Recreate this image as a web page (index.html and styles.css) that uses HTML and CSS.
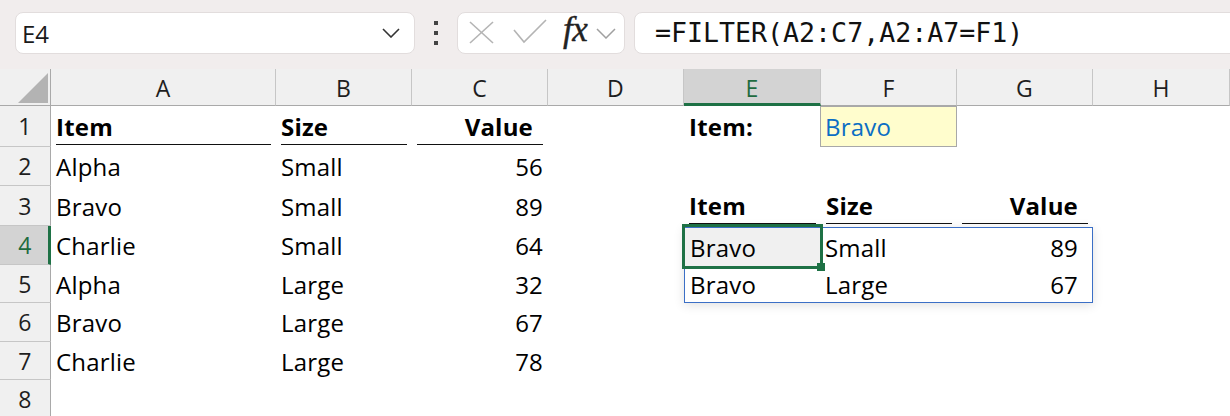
FILE: index.html
```html
<!DOCTYPE html>
<html>
<head>
<meta charset="utf-8">
<link rel="stylesheet" href="styles.css">
</head>
<body>
<div class="topbar">
  <div class="namebox">
    <span class="nb-text">E4</span>
    <svg class="nb-chev" width="18" height="10" viewBox="0 0 18 10"><polyline points="1,1 9,9 17,1" fill="none" stroke="#333" stroke-width="1.6"/></svg>
  </div>
  <div class="dots"><span></span><span></span><span></span></div>
  <div class="fxbox">
    <svg class="xc" width="92" height="42" viewBox="0 0 92 42">
      <line x1="12" y1="10" x2="35" y2="31" stroke="#b4b4b4" stroke-width="1.6"/>
      <line x1="35" y1="10" x2="12" y2="31" stroke="#b4b4b4" stroke-width="1.6"/>
      <polyline points="56,18 66,30 88,8" fill="none" stroke="#b4b4b4" stroke-width="1.6"/>
    </svg>
    <span class="fx">fx</span>
    <svg class="fx-chev" width="20" height="11" viewBox="0 0 20 11"><polyline points="1,1 10,10 19,1" fill="none" stroke="#a0a0a0" stroke-width="1.5"/></svg>
  </div>
  <div class="formula">=FILTER(A2:C7,A2:A7=F1)</div>
</div>

<div class="sheet">
  <div class="corner"><svg width="51" height="37" viewBox="0 0 51 37"><polygon points="48,4 48,34 18,34" fill="#b3b3b3"/></svg></div>
  <div class="ch">A</div><div class="ch">B</div><div class="ch">C</div><div class="ch">D</div>
  <div class="ch sel">E</div><div class="ch">F</div><div class="ch">G</div><div class="ch">H</div>

  <div class="rh">1</div>
  <div class="c"><div class="hd">Item</div></div>
  <div class="c"><div class="hd">Size</div></div>
  <div class="c"><div class="hd r">Value</div></div>
  <div class="c"></div>
  <div class="c b">Item:</div>
  <div class="c input">Bravo</div>
  <div class="c"></div><div class="c"></div>

  <div class="rh">2</div>
  <div class="c">Alpha</div><div class="c">Small</div><div class="c r">56</div>
  <div class="c"></div><div class="c"></div><div class="c"></div><div class="c"></div><div class="c"></div>

  <div class="rh">3</div>
  <div class="c">Bravo</div><div class="c">Small</div><div class="c r">89</div>
  <div class="c"></div>
  <div class="c"><div class="hd">Item</div></div>
  <div class="c"><div class="hd">Size</div></div>
  <div class="c"><div class="hd r">Value</div></div>
  <div class="c"></div>

  <div class="spill">
    <div class="sc active">Bravo</div><div class="sc f">Small</div><div class="sc r rg">89</div>
    <div class="sc">Bravo</div><div class="sc f">Large</div><div class="sc r rg">67</div>
  </div>

  <div class="rh sel">4</div>
  <div class="c">Charlie</div><div class="c">Small</div><div class="c r">64</div>
  <div class="c"></div><div class="c"></div>

  <div class="rh">5</div>
  <div class="c">Alpha</div><div class="c">Large</div><div class="c r">32</div>
  <div class="c"></div><div class="c"></div>

  <div class="rh">6</div>
  <div class="c">Bravo</div><div class="c">Large</div><div class="c r">67</div>
  <div class="c"></div><div class="c"></div><div class="c"></div><div class="c"></div><div class="c"></div>

  <div class="rh">7</div>
  <div class="c">Charlie</div><div class="c">Large</div><div class="c r">78</div>
  <div class="c"></div><div class="c"></div><div class="c"></div><div class="c"></div><div class="c"></div>

  <div class="rh">8</div>
  <div class="c"></div><div class="c"></div><div class="c"></div><div class="c"></div>
  <div class="c"></div><div class="c"></div><div class="c"></div><div class="c"></div>
</div>
</body>
</html>
```

FILE: styles.css
```css
* { box-sizing: border-box; }
html, body { margin: 0; padding: 0; }
body {
  width: 1230px;
  height: 416px;
  overflow: hidden;
  background: #ffffff;
  font-family: "Open Sans", "Noto Sans", sans-serif;
  color: #000;
}

.topbar {
  height: 69px;
  background: #f1eded;
  display: flex;
  align-items: flex-start;
  padding: 12px 0 0 15px;
}
.namebox {
  width: 400px;
  height: 42px;
  background: #fff;
  border: 1px solid #e2dddd;
  border-radius: 8px;
  display: flex;
  align-items: center;
  justify-content: space-between;
  padding: 0 14px 0 6px;
}
.nb-text {
  font-size: 24px;
  color: #1a1a1a;
}
.nb-chev { display: block; }
.dots {
  width: 42px;
  height: 42px;
  display: flex;
  flex-direction: column;
  align-items: center;
  justify-content: center;
  gap: 6px;
}
.dots span {
  width: 4px;
  height: 4px;
  background: #444;
  display: block;
}
.fxbox {
  width: 168px;
  height: 42px;
  background: #fff;
  border: 1px solid #e2dddd;
  border-radius: 8px;
  display: flex;
  align-items: center;
}
.xc { display: block; flex: none; }
.fx {
  font-family: "Liberation Serif", serif;
  font-style: italic;
  font-size: 35px;
  color: #222;
  margin-left: 13px;
  line-height: 42px;
  margin-top: -6px;
  letter-spacing: -0.5px;
  -webkit-text-stroke: 0.4px #222;
}
.fx-chev { display: block; margin-left: 9px; }
.formula {
  flex: 1;
  margin-left: 9px;
  margin-right: -20px;
  height: 42px;
  background: #fff;
  border: 1px solid #e2dddd;
  border-radius: 8px;
  font-family: "DejaVu Sans Mono", "Liberation Mono", monospace;
  font-size: 26.6px;
  line-height: 40px;
  padding-left: 20px;
  color: #111;
}

.sheet {
  display: grid;
  grid-template-columns: 51px 225px 136px 136px 136px 137px 136px 136px 137px;
  grid-template-rows: 37px 41px 39px 40px 39px 38px 39px 38px 38px;
  font-size: 24px;
  letter-spacing: 0.2px;
}
.corner {
  background: #f0f0f0;
  border-right: 1px solid #a9a9a9;
  border-bottom: 1px solid #a9a9a9;
}
.corner svg { display: block; }
.ch {
  background: #f0f0f0;
  border-right: 1px solid #c6c6c6;
  border-bottom: 1px solid #a9a9a9;
  display: flex;
  align-items: center;
  justify-content: center;
  font-size: 23px;
  color: #1e1e1e;
  padding-top: 2px;
}
.ch.sel {
  background: #d3d3d3;
  border-bottom: 3px solid #1e7145;
  color: #1e6b40;
  padding-top: 4px;
}
.rh {
  background: #f0f0f0;
  border-right: 1px solid #a9a9a9;
  border-bottom: 1px solid #c6c6c6;
  display: flex;
  align-items: center;
  justify-content: center;
  font-size: 23px;
  color: #1e1e1e;
}
.rh.sel {
  background: #d3d3d3;
  border-right: 3px solid #1e7145;
  color: #1e6b40;
  padding-left: 2px;
}
.c {
  display: flex;
  align-items: center;
  padding: 0 5px;
  white-space: nowrap;
  min-width: 0;
}
.c.r { justify-content: flex-end; }
.c.b { font-weight: 700; }
.hd {
  flex: 1;
  align-self: stretch;
  display: flex;
  align-items: center;
  font-weight: 700;
  border-bottom: 1px solid #111;
  margin-bottom: 2px;
  padding-top: 2px;
}
.c:has(.hd) { padding: 0 5px; align-items: stretch; }
.hd.r { justify-content: flex-end; padding-right: 10px; }
.c.input {
  background: #fffdcd;
  border: 1px solid #a8a8a8;
  color: #0b6ec4;
  padding-left: 4px;
  margin-left: -1px;
}

.spill {
  grid-column: 6 / 9;
  grid-row: 5 / 7;
  border: 1px solid #3b6fc6;
  box-shadow: 0 2px 10px rgba(0, 0, 0, 0.13);
  display: grid;
  grid-template-columns: 136px 136px 135px;
  grid-template-rows: 38px 37px;
  margin-top: 1px;
  background: #fff;
}
.sc {
  display: flex;
  align-items: center;
  padding: 0 5px;
  white-space: nowrap;
}
.sc.f { padding-left: 4px; }
.sc.r { justify-content: flex-end; }
.sc.rg { padding-right: 14px; }
.sc.active {
  position: relative;
  background: #f0f0f0;
}
.sc.active::after {
  content: "";
  position: absolute;
  left: -3px;
  top: -4px;
  right: -2px;
  bottom: -3px;
  border: 3px solid #1e7145;
}
.sc.active::before {
  content: "";
  position: absolute;
  right: -4px;
  bottom: -5px;
  width: 8px;
  height: 8px;
  background: #1e7145;
  z-index: 2;
}
```
